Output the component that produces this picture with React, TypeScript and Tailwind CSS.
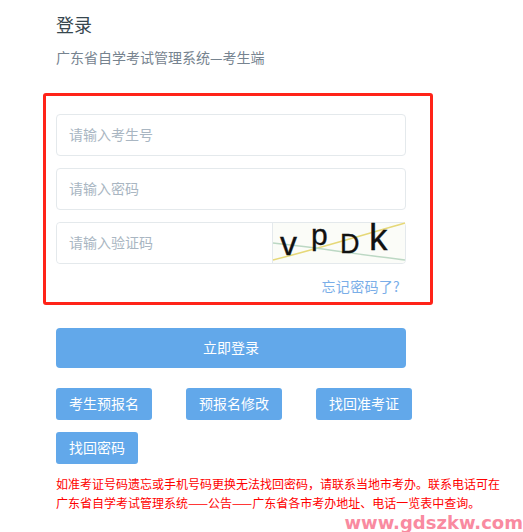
const font = "[font-family:'Noto_Sans_CJK_SC','Liberation_Sans',sans-serif]";
const captchaFont = "'Liberation Sans',sans-serif";

function Field({ placeholder }: { placeholder: string }) {
  return (
    <input
      placeholder={placeholder}
      className="h-[42px] w-[350px] rounded-[4px] border border-[#e4e9ec] bg-white px-3 pb-0.5 text-sm outline-none placeholder:text-[#a9b6c2]"
    />
  );
}

function SmallButton({ label }: { label: string }) {
  return (
    <button className="h-8 rounded-[3px] bg-[#62a8ea] px-[13px] pb-0.5 text-sm text-white">{label}</button>
  );
}

function Captcha() {
  return (
    <svg viewBox="0 0 132 40" className="h-10 w-[132px] overflow-visible rounded-r-[3px] bg-[#fbfcf8]">
      <path d="M0 37 C40 27 90 12 132 0" stroke="#e6d878" strokeWidth="1.5" fill="none" />
      <path d="M0 20 C40 24 90 32 132 37" stroke="#bcd8c4" strokeWidth="1.5" fill="none" />
      <g fill="#111" stroke="#111" strokeWidth="0.3" fontFamily={captchaFont}>
        <text x="7" y="32" fontSize="34">v</text>
        <text x="38" y="22" fontSize="30">p</text>
        <text x="67" y="30" fontSize="27">D</text>
        <text x="96" y="27" fontSize="37">k</text>
      </g>
    </svg>
  );
}

export default function App() {
  return (
    <div className={`${font} relative h-[532px] w-[523px] overflow-hidden bg-white pl-14`}>
      <h1 className="pt-[11px] text-lg leading-[26px] font-normal text-[#37474f]">登录</h1>
      <p className="mt-[10px] text-sm leading-[20px] text-[#76838f]">广东省自学考试管理系统—考生端</p>

      <div className="relative mt-[47px] flex w-[350px] flex-col gap-3">
        <Field placeholder="请输入考生号" />
        <Field placeholder="请输入密码" />
        <div className="flex h-[42px] w-[350px] rounded-[4px] border border-[#e4e9ec]">
          <input
            placeholder="请输入验证码"
            className="min-w-0 flex-1 rounded-l-[4px] border-r border-[#e4e9ec] bg-white px-3 pb-0.5 text-sm outline-none placeholder:text-[#a9b6c2]"
          />
          <Captcha />
        </div>
        <div className="absolute top-[-21px] left-[-13px] h-[212px] w-[390px] rounded-[3px] border-[3px] border-[#ff2318]" />
      </div>

      <div className="mt-[12px] w-[350px] text-right text-sm leading-[20px] tracking-[0.3px] text-[#7aaee8]">
        <a className="pr-[6px]">忘记密码了?</a>
      </div>

      <button className="mt-[32px] block h-10 w-[350px] rounded-[4px] bg-[#62a8ea] pb-0.5 text-sm text-white">立即登录</button>

      <div className="mt-5 flex gap-[34px]">
        <SmallButton label="考生预报名" />
        <SmallButton label="预报名修改" />
        <SmallButton label="找回准考证" />
      </div>
      <div className="mt-3">
        <SmallButton label="找回密码" />
      </div>

      <p className="mt-[10px] w-[450px] text-xs leading-[19px] text-[#ff0000]">
        如准考证号码遗忘或手机号码更换无法找回密码，请联系当地市考办。联系电话可在广东省自学考试管理系统——公告——广东省各市考办地址、电话一览表中查询。
      </p>

      <div className="absolute right-0 bottom-[-2px] text-lg leading-[22px] font-bold text-[#f98aa0] [font-family:'DejaVu_Sans',sans-serif]">
        www.gdszkw.com
      </div>
    </div>
  );
}
